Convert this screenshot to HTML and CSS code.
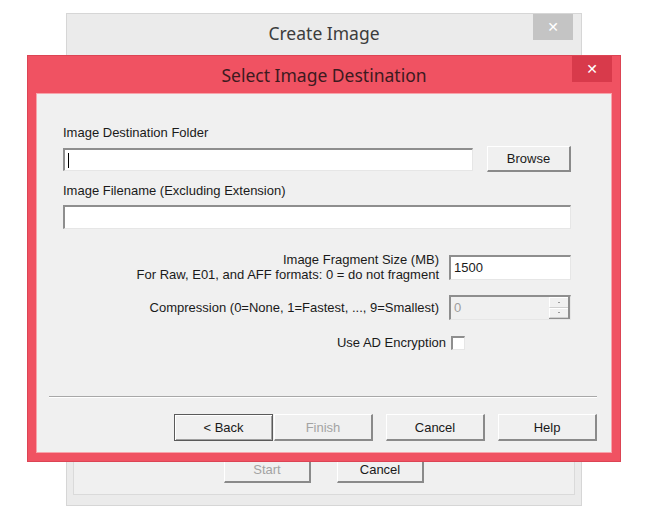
FILE: index.html
```html
<!DOCTYPE html>
<html lang="en">
<head>
    <meta charset="UTF-8">
    <title>Select Image Destination</title>
    <link rel="stylesheet" href="styles.css">
</head>
<body>
    <div class="desktop">
        <div class="window back-window">
            <div class="titlebar">
                <span class="title">Create Image</span>
                <span class="close">&#x2715;</span>
            </div>
            <div class="back-body">
                <div class="back-buttons">
                    <button class="btn" disabled>Start</button>
                    <button class="btn">Cancel</button>
                </div>
            </div>
        </div>

        <div class="window front-window">
            <div class="titlebar">
                <span class="title">Select Image Destination</span>
                <span class="close">&#x2715;</span>
            </div>
            <div class="body">
                <div class="form">
                    <div class="label">Image Destination Folder</div>
                    <div class="folder-row">
                        <div class="field has-caret"></div>
                        <button class="btn browse">Browse</button>
                    </div>
                    <div class="label label-2">Image Filename (Excluding Extension)</div>
                    <div class="field field-wide"></div>

                    <div class="options">
                        <div class="opt-label">Image Fragment Size (MB)<br>For Raw, E01, and AFF formats: 0 = do not fragment</div>
                        <div class="field field-opt">1500</div>

                        <div class="opt-label">Compression (0=None, 1=Fastest, ..., 9=Smallest)</div>
                        <div class="field field-opt spinner">
                            <span class="spin-value">0</span>
                            <span class="spin-btns">
                                <span class="spin-btn"><i></i></span>
                                <span class="spin-btn"><i></i></span>
                            </span>
                        </div>
                    </div>

                    <div class="ad-row">
                        <span>Use AD Encryption</span>
                        <span class="checkbox"></span>
                    </div>
                </div>

                <div class="separator"></div>

                <div class="buttons">
                    <button class="btn default">&lt; Back</button>
                    <button class="btn finish" disabled>Finish</button>
                    <button class="btn">Cancel</button>
                    <button class="btn">Help</button>
                </div>
            </div>
        </div>
    </div>
</body>
</html>
```

FILE: styles.css
```css
body {
    margin: 0;
    background-color: #ffffff;
    font-family: "Liberation Sans", Arial, sans-serif;
    font-size: 13px;
    color: #1a1a1a;
}
.desktop {
    position: relative;
    width: 650px;
    height: 515px;
}
.window {
    position: absolute;
    box-sizing: border-box;
    display: flex;
    flex-direction: column;
}
.titlebar {
    position: relative;
    display: flex;
    align-items: center;
    justify-content: center;
    flex-shrink: 0;
}
.title {
    font-family: "Noto Sans", "Open Sans", sans-serif;
    font-size: 17.5px;
}
.close {
    position: absolute;
    top: 0;
    width: 40px;
    height: 26px;
    display: flex;
    align-items: center;
    justify-content: center;
    color: #ffffff;
    font-family: "DejaVu Sans", sans-serif;
    font-size: 14px;
    font-weight: bold;
}

/* window behind */
.back-window {
    left: 66px;
    top: 13px;
    width: 516px;
    height: 493px;
    background-color: #ebebeb;
    border: 1px solid #d6d6d6;
}
.back-window .titlebar {
    height: 48px;
}
.back-window .title {
    color: #3c3c3c;
    margin-top: -11px;
}
.back-window .close {
    right: 8px;
    background-color: #c4c4c4;
}
.back-body {
    flex: 1;
    margin: 0 6px 10px 6px;
    background-color: #f0f0f0;
    border: 1px solid #dadada;
    display: flex;
    flex-direction: column;
    justify-content: flex-end;
}
.back-buttons {
    display: flex;
    justify-content: center;
    gap: 26px;
    padding-bottom: 11px;
}
.back-buttons .btn {
    width: 87px;
    height: 26px;
}

/* dialog in front */
.front-window {
    left: 27px;
    top: 55px;
    width: 594px;
    height: 407px;
    background-color: #f05262;
    border: 1px solid #dc4454;
}
.front-window .titlebar {
    height: 37px;
}
.front-window .title {
    color: #3d1a1f;
}
.front-window .close {
    right: 8px;
    background-color: #d83a4b;
}
.body {
    flex: 1;
    margin: 0 8px 8px 8px;
    background-color: #f0f0f0;
    border: 1px solid #f7a4ab;
    display: flex;
    flex-direction: column;
}
.form {
    padding: 31px 40px 0 26px;
}
.label {
    line-height: 15px;
}
.label-2 {
    margin-top: 11px;
}
.folder-row {
    display: flex;
    align-items: center;
    justify-content: space-between;
    margin-top: 6px;
}
.field {
    box-sizing: border-box;
    height: 24px;
    background-color: #ffffff;
    border-top: 2px solid #8e8e8e;
    border-left: 2px solid #8e8e8e;
    border-right: 1px solid #e6e6e6;
    border-bottom: 1px solid #e6e6e6;
    padding: 2px 3px;
    line-height: 18px;
}
.folder-row .field {
    width: 410px;
    height: 23px;
}
.has-caret::before {
    content: "";
    display: block;
    width: 1px;
    height: 15px;
    margin-top: 1px;
    background-color: #000000;
}
.field-wide {
    margin-top: 7px;
}
.options {
    display: grid;
    grid-template-columns: 1fr 122px;
    column-gap: 10px;
    row-gap: 13px;
    align-items: center;
    margin-top: 23px;
}
.opt-label {
    text-align: right;
    line-height: 15px;
}
.options .field {
    height: 25px;
}
.options .opt-label:first-child {
    align-self: start;
}
.spinner {
    background-color: #f0f0f0;
    display: flex;
    align-items: center;
    padding: 0 0 0 3px;
    color: #9d9d9d;
}
.spin-value {
    flex: 1;
}
.spin-btns {
    display: flex;
    flex-direction: column;
    width: 19px;
    height: 21px;
    border-right: 2px solid #8e8e8e;
    border-bottom: 1px solid #8e8e8e;
}
.spin-btn {
    flex: 1;
    display: flex;
    align-items: center;
    justify-content: center;
    border-top: 1px solid #ffffff;
    border-left: 1px solid #ffffff;
    border-bottom: 1px solid #cfcfcf;
}
.spin-btn i {
    width: 2px;
    height: 1px;
    background-color: #9a9a9a;
}
.ad-row {
    display: flex;
    align-items: center;
    justify-content: flex-end;
    gap: 5px;
    margin-top: 15px;
    padding-right: 106px;
}
.checkbox {
    box-sizing: border-box;
    width: 14px;
    height: 14px;
    background-color: #ffffff;
    border-top: 2px solid #8e8e8e;
    border-left: 2px solid #8e8e8e;
    border-right: 1px solid #e6e6e6;
    border-bottom: 1px solid #e6e6e6;
}
.separator {
    margin: auto 14px 0 12px;
    height: 1px;
    background-color: #a8a8a8;
    border-bottom: 1px solid #ffffff;
}
.buttons {
    display: flex;
    justify-content: flex-end;
    gap: 13px;
    padding: 16px 14px 11px 0;
}
.btn {
    box-sizing: border-box;
    width: 99px;
    height: 27px;
    padding: 0;
    background-color: #f0f0f0;
    font-family: "Liberation Sans", Arial, sans-serif;
    font-size: 13px;
    color: #1a1a1a;
    border-top: 1px solid #ffffff;
    border-left: 1px solid #ffffff;
    border-right: 2px solid #8a8a8a;
    border-bottom: 2px solid #8a8a8a;
}
.btn:disabled {
    color: #a3a3a3;
}
.browse {
    width: 84px;
    height: 26px;
}
.btn.default {
    border: 1px solid #5a5a5a;
    box-shadow: inset 1px 1px #ffffff, inset -1px -1px #a0a0a0;
    margin-right: -12px;
}
```
